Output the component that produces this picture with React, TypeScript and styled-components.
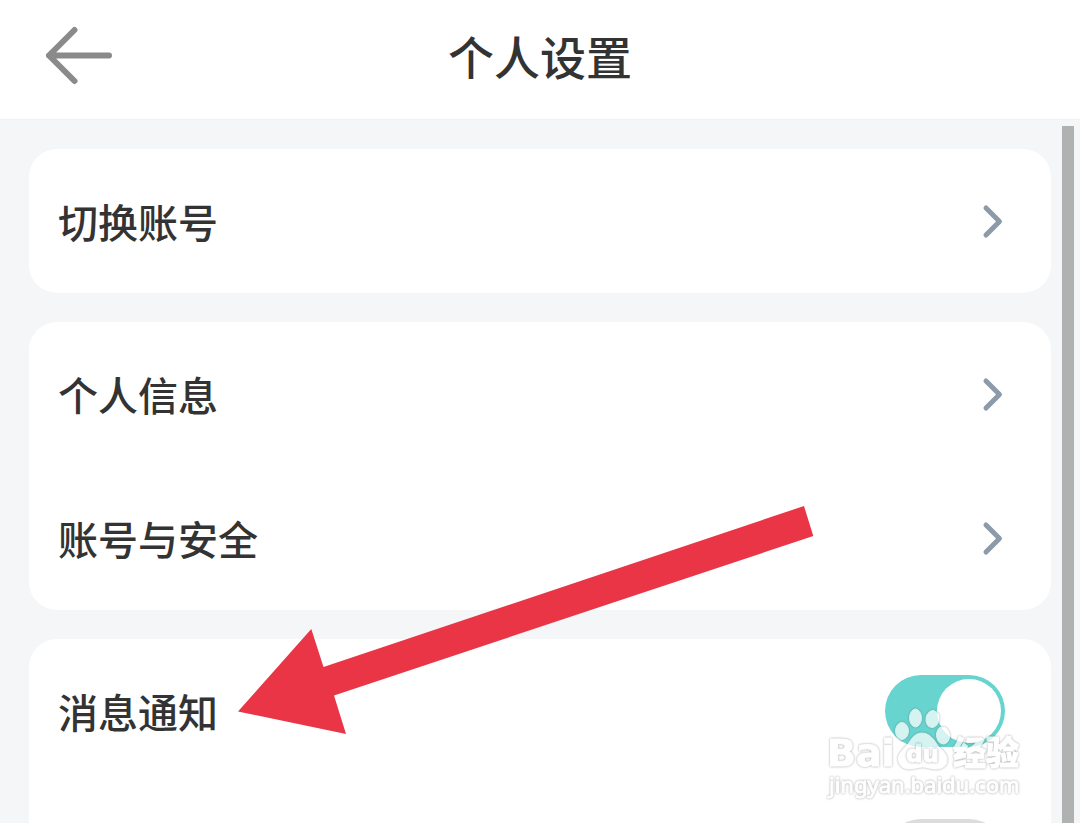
import React from "react";
import styled, { createGlobalStyle } from "styled-components";

const GlobalStyle = createGlobalStyle`
  * {
    box-sizing: border-box;
  }
  body {
    margin: 0;
    background: #f4f6f8;
    color: #333333;
    font-family: "Noto Sans CJK SC", "Liberation Sans", sans-serif;
  }
`;

const Page = styled.div`
  position: relative;
  display: flex;
  flex-direction: column;
  height: 100vh;
  overflow: hidden;
`;

const Header = styled.header`
  display: grid;
  grid-template-columns: 1fr auto 1fr;
  align-items: center;
  flex: none;
  height: 120px;
  padding: 0 44px 10px;
  background: #ffffff;
  border-bottom: 1px solid #f0f1f2;
`;

const BackButton = styled.button`
  display: flex;
  justify-self: start;
  padding: 0;
  border: 0;
  background: none;
  cursor: pointer;
`;

const Title = styled.h1`
  margin: 0;
  font-size: 46px;
  font-weight: 500;
  line-height: 64px;
`;

const Body = styled.div`
  display: flex;
  flex: 1;
  min-height: 0;
  padding-right: 6px;
`;

const Cards = styled.main`
  display: flex;
  flex: 1;
  flex-direction: column;
  gap: 29px;
  padding: 29px 11px 0 29px;
`;

const ScrollThumb = styled.div`
  flex: none;
  width: 12px;
  margin-top: 6px;
  background: #b0b2b1;
`;

const Card = styled.section`
  position: relative;
  flex: none;
  background: #ffffff;
  border-radius: 28px;
`;

const rowLayout = `
  display: flex;
  align-items: center;
  justify-content: space-between;
  width: 100%;
  height: 144px;
  padding: 0 46px 0 29px;
  color: inherit;
  font-size: 40px;
  font-weight: 500;
  line-height: 56px;
`;

const LinkRow = styled.a`
  ${rowLayout}
  text-decoration: none;
`;

const ToggleRow = styled.label`
  ${rowLayout}
`;

const Switch = styled.input`
  appearance: none;
  display: flex;
  width: 120px;
  height: 72px;
  margin: 0;
  padding: 4px;
  border-radius: 36px;
  background: #dcdcdc;
  cursor: pointer;

  &::before {
    content: "";
    width: 64px;
    height: 64px;
    border-radius: 50%;
    background: #ffffff;
  }

  &:checked {
    justify-content: flex-end;
    background: #67d4cf;
  }
`;

const Pointer = styled.svg`
  position: absolute;
  top: -133px;
  left: 209px;
  pointer-events: none;
`;

const Watermark = styled.svg`
  position: absolute;
  right: 54px;
  bottom: 21px;
  opacity: 0.72;
  pointer-events: none;

  .mark {
    fill: #ffffff;
    stroke: #ffffff;
    stroke-width: 1px;
    stroke-linejoin: round;
    filter: drop-shadow(0 0 1px rgba(90, 90, 90, 0.75));
  }
  .latin {
    font-family: "DejaVu Sans", sans-serif;
    font-weight: 700;
  }
  .han {
    font-family: "Noto Sans CJK SC", sans-serif;
    font-weight: 900;
  }
  .site {
    font-family: "Noto Sans", sans-serif;
    font-weight: 400;
  }
`;

const Chevron = () => (
  <svg width="24" height="36" viewBox="0 0 24 36" fill="none" aria-hidden="true">
    <path
      d="M5 5 18.5 18.5 5 32"
      stroke="#8d9aa9"
      strokeWidth="5"
      strokeLinecap="round"
      strokeLinejoin="round"
    />
  </svg>
);

const links = (labels: string[]) =>
  labels.map((label) => (
    <LinkRow href="#" key={label}>
      {label}
      <Chevron />
    </LinkRow>
  ));

export default function App() {
  return (
    <>
      <GlobalStyle />
      <Page>
        <Header>
          <BackButton aria-label="返回">
            <svg width="70" height="60" viewBox="0 0 70 60" fill="none">
              <path
                d="M30.5 5 5 30.5 30.5 56M5 30.5H65"
                stroke="#8a8a8a"
                strokeWidth="6"
                strokeLinecap="round"
                strokeLinejoin="round"
              />
            </svg>
          </BackButton>
          <Title>个人设置</Title>
        </Header>
        <Body>
          <Cards>
            <Card>{links(["切换账号"])}</Card>
            <Card>{links(["个人信息", "账号与安全"])}</Card>
            <Card>
              <ToggleRow>
                消息通知
                <Switch type="checkbox" role="switch" defaultChecked />
              </ToggleRow>
              <ToggleRow>
                <span />
                <Switch type="checkbox" role="switch" aria-label="通知" />
              </ToggleRow>
              <Pointer width="576" height="229" viewBox="0 0 576 229" aria-hidden="true">
                <path
                  d="M0 205.5 73.3 123 85.5 161 566 0 575.3 30 96 189.5 108 228Z"
                  fill="#ea3547"
                />
              </Pointer>
            </Card>
          </Cards>
          <ScrollThumb />
        </Body>
        <Watermark width="200" height="96" viewBox="0 0 200 96" role="img" aria-label="Baidu 经验">
          <text className="mark latin" x="1" y="60" fontSize="38">
            Bai
          </text>
          <g className="mark">
            <ellipse cx="76" cy="25" rx="6.5" ry="8.5" />
            <ellipse cx="89.5" cy="12" rx="6" ry="9" />
            <ellipse cx="106.5" cy="13" rx="6.5" ry="8.5" transform="rotate(10 106.5 13)" />
            <ellipse cx="117" cy="29.5" rx="6.5" ry="8.5" transform="rotate(-8 117 29.5)" />
            <path d="M96 27C103 27 108 33 112 40C117 45 121 48 121 54C121 60 116 63 110 63C104 63 101 61 96.5 61C92 61 88 63 83 63C76 63 72 58 72.5 52C73 46 78 43 82 38C86 32 89 27 96 27Z" />
          </g>
          <text className="mark latin" x="80" y="56" fontSize="23">
            du
          </text>
          <text className="mark han" x="127" y="59" fontSize="33">
            经验
          </text>
          <text className="mark site" x="3" y="87" fontSize="22">
            jingyan.baidu.com
          </text>
        </Watermark>
      </Page>
    </>
  );
}
